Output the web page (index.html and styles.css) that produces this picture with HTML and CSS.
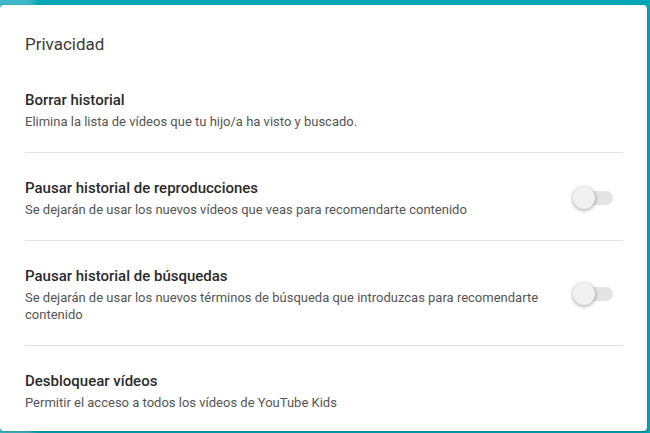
FILE: index.html
```html
<html lang="es"><head>
  <meta charset="UTF-8">
  <meta name="viewport" content="width=device-width, initial-scale=1.0">
  <title>Privacidad</title>
  <link rel="stylesheet" href="styles.css">
</head>
<body>
  <div class="dialog">
    <div class="dialog-title">Privacidad</div>

    <div class="setting">
      <div class="setting-text">
        <div class="setting-name">Borrar historial</div>
        <div class="setting-desc">Elimina la lista de vídeos que tu hijo/a ha visto y buscado.</div>
      </div>
    </div>

    <div class="setting">
      <div class="setting-text">
        <div class="setting-name">Pausar historial de reproducciones</div>
        <div class="setting-desc">Se dejarán de usar los nuevos vídeos que veas para recomendarte contenido</div>
      </div>
      <div class="toggle"><div class="toggle-bar"></div><div class="toggle-knob"></div></div>
    </div>

    <div class="setting">
      <div class="setting-text">
        <div class="setting-name">Pausar historial de búsquedas</div>
        <div class="setting-desc">Se dejarán de usar los nuevos términos de búsqueda que introduzcas para recomendarte contenido</div>
      </div>
      <div class="toggle"><div class="toggle-bar"></div><div class="toggle-knob"></div></div>
    </div>

    <div class="setting">
      <div class="setting-text">
        <div class="setting-name">Desbloquear vídeos</div>
        <div class="setting-desc">Permitir el acceso a todos los vídeos de YouTube Kids</div>
      </div>
    </div>
  </div>
</body></html>
```

FILE: styles.css
```css
html, body {
  margin: 0;
  height: 433px;
  overflow: hidden;
}

body {
  font-family: Roboto, "Noto Sans", sans-serif;
  background: linear-gradient(to right, #3fb9c7 0 28px, #00a7b6 40px);
  padding: 5px 3px 2px 0;
  box-sizing: border-box;
}

.dialog {
  background: white;
  height: 426px;
  border-radius: 4px;
  box-shadow: 0 1px 3px rgba(0,0,0,0.25);
  padding: 27px 24px 0 25px;
  box-sizing: border-box;
}

.dialog-title {
  font-size: 17px;
  line-height: 24px;
  color: #3a3a3a;
  margin-bottom: 9px;
}

.setting {
  display: flex;
  align-items: center;
  padding: 25px 0 22px 0;
  border-bottom: 1px solid #e3e3e3;
}

.setting:last-child {
  border-bottom: none;
}

.setting-text {
  flex: 1;
  padding-right: 20px;
}

.setting-name {
  font-size: 15px;
  font-weight: 500;
  line-height: 20px;
  color: #2b2b2b;
  margin-bottom: 3px;
}

.setting-desc {
  font-size: 13px;
  line-height: 17px;
  color: #555;
}

.toggle {
  position: relative;
  width: 40px;
  height: 23px;
  margin-right: 10px;
  flex-shrink: 0;
}

.toggle-bar {
  position: absolute;
  left: 4px;
  right: 0;
  top: 4px;
  height: 14px;
  border-radius: 7px;
  background: #e4e4e4;
}

.toggle-knob {
  position: absolute;
  left: 0;
  top: 0;
  width: 22px;
  height: 22px;
  border-radius: 50%;
  background: #f1f1f1;
  box-shadow: 0 1px 4px rgba(0,0,0,0.4);
}
```
